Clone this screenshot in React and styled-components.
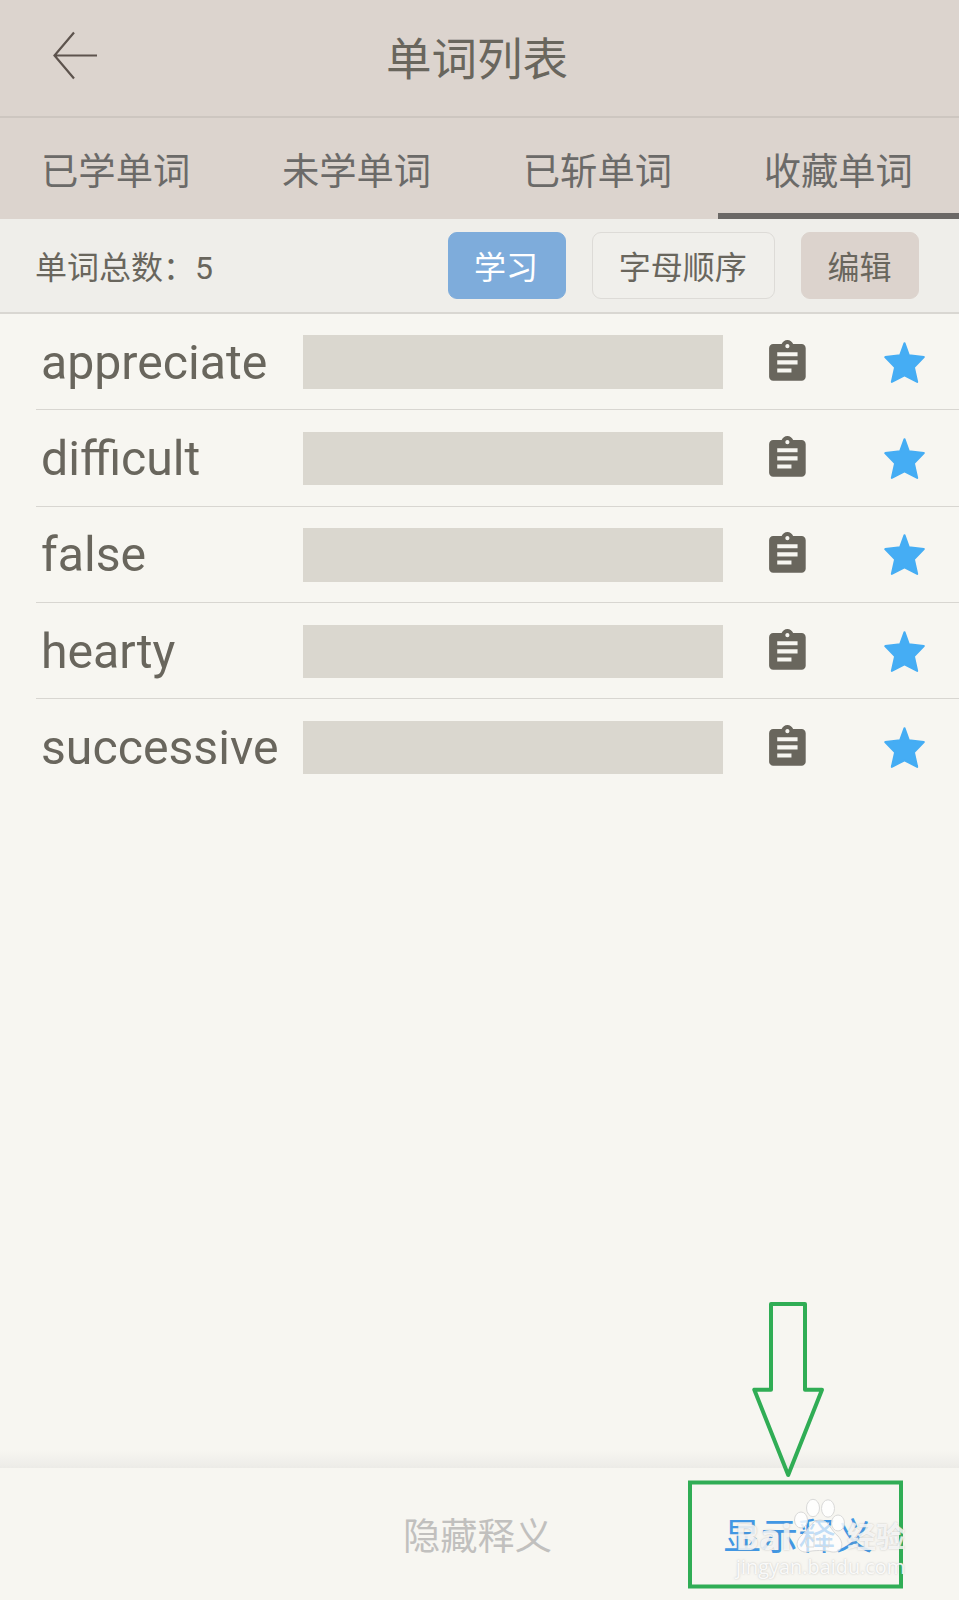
import React from "react";
import styled, { createGlobalStyle } from "styled-components";
import { MdAssignment } from "react-icons/md";

const Global = createGlobalStyle`
  body { margin: 0; }
  * { box-sizing: border-box; }
`;

const Screen = styled.div`
  position: relative;
  width: 959px;
  height: 1600px;
  display: flex;
  flex-direction: column;
  overflow: hidden;
  background: #f7f6f1;
  color: #69665d;
  font-family: Roboto, "Noto Sans CJK SC", sans-serif;
`;

const Header = styled.header`
  height: 118px;
  flex: none;
  display: grid;
  grid-template-columns: 152px 1fr 157px;
  align-items: center;
  background: #dcd4ce;
  border-bottom: 2px solid #cdc6c0;
`;

const Back = styled.button`
  justify-self: start;
  margin: 0 0 6px 50px;
  padding: 0;
  border: 0;
  background: none;
  line-height: 0;
`;

const Title = styled.h1`
  margin: 0;
  padding-top: 5px;
  font-size: 45.5px;
  line-height: 60px;
  font-weight: 400;
  text-align: center;
`;

const Tabs = styled.nav`
  flex: none;
  display: flex;
  height: 101px;
  margin-left: -4.8px;
  background: #dcd4ce;
`;

const Tab = styled.div`
  flex: none;
  width: 240.9px;
  display: flex;
  align-items: center;
  justify-content: center;
  padding-top: 7px;
  border-bottom: 6px solid ${(p) => (p.$active ? "#6b6866" : "transparent")};
  font-size: 37.3px;
  color: #6b6a68;
`;

const Toolbar = styled.div`
  flex: none;
  height: 95px;
  display: flex;
  align-items: center;
  gap: 26.5px;
  padding: 0 40px 0 35px;
  background: #efeeea;
  border-bottom: 2px solid #d9d7d2;
  font-size: 32px;
`;

const Total = styled.div`
  flex: 1;
  padding-bottom: 2px;
`;

const palettes = {
  primary: { bg: "#7eacdb", fg: "#ffffff", line: "#7eacdb" },
  outline: { bg: "#f0efeb", fg: "#69665d", line: "#dddbd7" },
  plain: { bg: "#dcd3cd", fg: "#69665d", line: "#dcd3cd" },
};

const Button = styled.button`
  height: 67px;
  width: ${(p) => (p.$wide ? 182.5 : 118)}px;
  padding: 0 1px 2px 0;
  border: 1px solid ${(p) => palettes[p.$kind].line};
  border-radius: 9px;
  background: ${(p) => palettes[p.$kind].bg};
  color: ${(p) => palettes[p.$kind].fg};
  font: inherit;
`;

const List = styled.ul`
  flex: 1;
  margin: 0;
  padding: 0 0 0 36px;
  list-style: none;
`;

const Row = styled.li`
  height: 96.35px;
  display: grid;
  grid-template-columns: 267.3px 419.4px 1fr 76px;
  align-items: center;
  padding-top: 1px;
  border-bottom: 1.6px solid #d8d6d1;
  &:last-child {
    border-color: transparent;
  }
`;

const Word = styled.span`
  padding-left: 5px;
  font-size: 48.2px;
`;

const Mask = styled.div`
  height: 53.4px;
  background: #dad7cf;
`;

const NoteIcon = styled(MdAssignment)`
  width: 48.8px;
  height: 48.8px;
  margin-left: 40.2px;
`;

const Footer = styled.footer`
  flex: none;
  height: 132px;
  display: grid;
  grid-template-columns: repeat(3, 1fr);
  align-items: center;
  justify-items: center;
  font-size: 37.3px;
`;

const Shade = styled.div`
  flex: none;
  height: 18px;
  background: linear-gradient(#f7f6f1, #ecebe7);
`;

const Choice = styled.span`
  grid-column: ${(p) => p.$column};
  padding: 0 ${(p) => (p.$active ? 2 : 4)}px 0 0;
  color: ${(p) => (p.$active ? "#4197e3" : "#c1c0be")};
`;

const Highlight = styled.svg`
  position: absolute;
  left: 688px;
  top: 1300px;
`;

const Watermark = styled.div`
  position: absolute;
  left: 735px;
  top: 1494px;
  width: 180px;
  height: 90px;
  color: rgba(255, 255, 255, 0.78);
  text-shadow: 0 0 2px rgba(150, 150, 150, 0.55);
`;

const Brand = styled.div`
  position: absolute;
  left: ${(p) => p.$x}px;
  top: 23px;
  font: 700 ${(p) => p.$size}px/40px "Open Sans", "Noto Sans CJK SC", sans-serif;
  white-space: nowrap;
`;

const Site = styled.div`
  position: absolute;
  left: 1px;
  top: 61px;
  font: 400 19.9px/24px "Open Sans", sans-serif;
  color: rgba(255, 255, 255, 0.9);
`;

const Paw = styled.svg`
  position: absolute;
  left: 58px;
  top: 2px;
`;

const StarIcon = styled.svg`
  display: block;
`;

const Star = () => (
  <StarIcon width="43" height="43" viewBox="0 0 43 43">
    <path
      d="M21.5 2.2 25.8 14.2 40.8 16.1 30.9 26.3 34.2 40.9 21.5 34.3 8.8 40.9 12.1 26.3 2.2 16.1 17.2 14.2Z"
      fill="#45adf4"
      stroke="#45adf4"
      strokeWidth="2"
      strokeLinejoin="round"
    />
  </StarIcon>
);

const tabs = ["已学单词", "未学单词", "已斩单词", "收藏单词"];
const words = ["appreciate", "difficult", "false", "hearty", "successive"];

export default function App() {
  return (
    <Screen>
      <Global />
      <Header>
        <Back aria-label="返回">
          <svg width="50" height="50" viewBox="0 0 50 50" fill="none" stroke="#5d534d" strokeWidth="2.2">
            <path d="M24 2.5 4.5 25.5 24 48.5M4.5 25.5H47" />
          </svg>
        </Back>
        <Title>单词列表</Title>
      </Header>
      <Tabs>
        {tabs.map((t, i) => (
          <Tab key={t} $active={i === 3}>{t}</Tab>
        ))}
      </Tabs>
      <Toolbar>
        <Total>单词总数：5</Total>
        <Button $kind="primary">学习</Button>
        <Button $kind="outline" $wide>字母顺序</Button>
        <Button $kind="plain">编辑</Button>
      </Toolbar>
      <List>
        {words.map((w) => (
          <Row key={w}>
            <Word>{w}</Word>
            <Mask />
            <NoteIcon />
            <Star />
          </Row>
        ))}
      </List>
      <Shade />
      <Footer>
        <Choice $column={2}>隐藏释义</Choice>
        <Choice $column={3} $active>显示释义</Choice>
      </Footer>
      <Highlight width="216" height="290" fill="none" stroke="#30ad55" strokeWidth="4" strokeLinejoin="round">
        <path d="M83 4H117V89.7H134L100.2 175 66.3 89.7H83Z" />
        <rect x="2" y="182.5" width="211" height="104" strokeLinejoin="miter" />
      </Highlight>
      <Watermark>
        <Brand $x={0} $size={36}>Bai</Brand>
        <Brand $x={112} $size={29}>经验</Brand>
        <Paw width="54" height="60" stroke="#d9d9d8" strokeWidth="1">
          <g fill="rgba(255,255,255,.85)">
            <ellipse cx="8" cy="24" rx="6.5" ry="8" />
            <ellipse cx="20" cy="12" rx="6.5" ry="8.7" />
            <ellipse cx="35" cy="12.5" rx="6.5" ry="8.7" />
            <ellipse cx="45" cy="27" rx="6.5" ry="8" />
          </g>
          <path fill="rgba(255,255,255,.68)" d="M27 24C18 24 16 34 9 39C-1 48 6 57 14 56C21 54 32 54 39 56C49 57 52 48 45 40C38 35 36 24 27 24Z" />
          <path d="M21 37V51H14Q11 46 14 42H21M27 41V49Q29 51 36 51V41" fill="none" />
        </Paw>
        <Site>jingyan.baidu.com</Site>
      </Watermark>
    </Screen>
  );
}
